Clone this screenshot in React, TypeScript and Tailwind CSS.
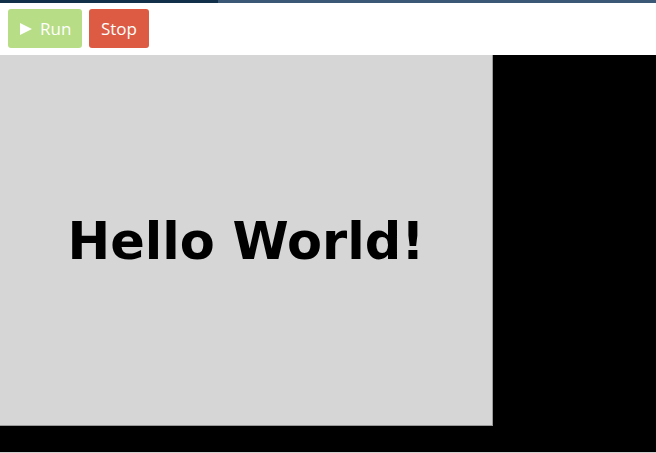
const App = () => {
  return (
    <div className="w-[656px] h-[453px] bg-white overflow-hidden flex flex-col">
      {/* progress bar */}
      <div className="h-[3px] w-full bg-[#3b5876] flex">
        <div className="h-full w-[218px] bg-[#12304a]" />
      </div>
      {/* toolbar */}
      <div className="flex items-center gap-[7px] px-2 pt-[6px] pb-[7px] font-['Open_Sans',sans-serif] text-[17px] text-white">
        <button className="h-[39px] w-[74px] rounded-[3px] bg-[#b7dd86] flex items-center pl-[12px] gap-[8px]">
          <svg width="12" height="12" viewBox="0 0 12 12">
            <path d="M0 0 L12 6 L0 12 Z" fill="white" />
          </svg>
          <span>Run</span>
        </button>
        <button className="h-[39px] w-[60px] rounded-[3px] bg-[#dd5b43] flex items-center justify-center">
          Stop
        </button>
      </div>
      {/* stage */}
      <div className="h-[397px] w-full bg-black">
        <div className="w-[493px] h-[371px] bg-[#d6d6d6] border-r border-b border-[#9a9a9a] flex items-center justify-center">
          <span className="font-['DejaVu_Sans',sans-serif] font-bold text-[51px] text-black leading-none pt-[2px]">
            Hello World!
          </span>
        </div>
      </div>
      <div className="h-px w-full bg-[#cfcfcf]" />
    </div>
  );
};

export default App;
